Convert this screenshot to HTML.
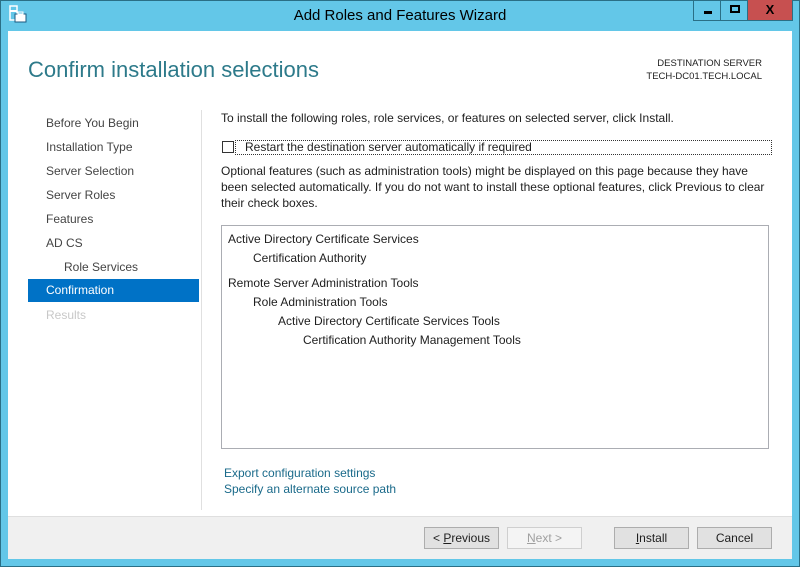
<!DOCTYPE html>
<html><head><meta charset="utf-8"><style>
*{margin:0;padding:0;box-sizing:border-box}
body{width:800px;height:567px;overflow:hidden;background:#63c7e8;font-family:"Liberation Sans",sans-serif;font-size:12px;color:#1e1e1e;position:relative}
.a{position:absolute;white-space:nowrap}
.btn{position:absolute;top:527px;width:75px;height:22px;border:1px solid #adadad;background:#e1e1e1;text-align:center;line-height:20px;font-size:12px}
</style></head><body>
<div class="a" style="left:0;top:0;width:800px;height:567px;border:1px solid #2a6f86"></div>
<svg class="a" style="left:9px;top:5px" width="18" height="18" viewBox="0 0 18 18"><rect x="1" y="1" width="7" height="14" fill="none" stroke="#fff" stroke-width="1.5"/><rect x="1" y="5" width="7" height="2" fill="#fff"/><rect x="6" y="9" width="11" height="8" fill="#fff" stroke="#1a5a80"/><rect x="9" y="7" width="5" height="2" fill="none" stroke="#fff"/></svg>
<div class="a" style="left:0;width:800px;top:7px;text-align:center;font-size:15px;color:#000">Add Roles and Features Wizard</div>
<div class="a" style="left:693px;top:0;width:28px;height:21px;border:1px solid #2a6f86;border-top:0"><div class="a" style="left:10px;top:11px;width:8px;height:3px;background:#000"></div></div>
<div class="a" style="left:720px;top:0;width:28px;height:21px;border:1px solid #2a6f86;border-top:0"><div class="a" style="left:9px;top:5px;width:10px;height:8px;border:2px solid #000"></div></div>
<div class="a" style="left:747px;top:0;width:46px;height:21px;background:#c75050;border:1px solid #2a6f86;border-top:0;text-align:center;font-weight:bold;font-size:13px;line-height:20px;color:#000">X</div>
<div class="a" style="left:8px;top:31px;width:784px;height:528px;background:#fff"></div>
<div class="a" style="left:8px;top:516px;width:784px;height:43px;background:#f0f0f0;border-top:1px solid #dfdfdf"></div>
<div class="a" style="left:28px;top:57px;font-size:22px;color:#2d7a8a">Confirm installation selections</div>
<div class="a" style="right:38px;top:57px;font-size:9.5px;text-align:right;line-height:13px">DESTINATION SERVER<br>TECH-DC01.TECH.LOCAL</div>
<div class="a" style="left:201px;top:110px;width:1px;height:400px;background:#e0e0e0"></div>
<div class="a" style="left:46px;top:111px;line-height:24px;color:#444">Before You Begin<br>Installation Type<br>Server Selection<br>Server Roles<br>Features<br>AD CS<br><span style="padding-left:18px">Role Services</span></div>
<div class="a" style="left:28px;top:279px;width:171px;height:23px;background:#0072c6;color:#fff;padding-left:18px;line-height:23px">Confirmation</div>
<div class="a" style="left:46px;top:308px;color:#c8c8c8">Results</div>
<div class="a" style="left:221px;top:111px">To install the following roles, role services, or features on selected server, click Install.</div>
<div class="a" style="left:222px;top:141px;width:12px;height:12px;border:1px solid #333"></div>
<div class="a" style="left:235px;top:140px;width:537px;height:15px;border:1px dotted #333;padding-left:9px;line-height:13px">Restart the destination server automatically if required</div>
<div class="a" style="left:221px;top:163px;line-height:16px">Optional features (such as administration tools) might be displayed on this page because they have<br>been selected automatically. If you do not want to install these optional features, click Previous to clear<br>their check boxes.</div>
<div class="a" style="left:221px;top:225px;width:548px;height:224px;border:1px solid #abadb3"></div>
<div class="a" style="left:228px;top:230px;line-height:19px">Active Directory Certificate Services<br><span style="padding-left:25px">Certification Authority</span><br><div style="height:6px"></div>Remote Server Administration Tools<br><span style="padding-left:25px">Role Administration Tools</span><br><span style="padding-left:50px">Active Directory Certificate Services Tools</span><br><span style="padding-left:75px">Certification Authority Management Tools</span></div>
<div class="a" style="left:224px;top:465px;color:#1a6a8a;line-height:16px">Export configuration settings<br>Specify an alternate source path</div>
<div class="btn" style="left:424px">&lt; <u>P</u>revious</div>
<div class="btn" style="left:507px;color:#a0a0a0;border-color:#cfcfcf;background:#f4f4f4"><u>N</u>ext &gt;</div>
<div class="btn" style="left:614px"><u>I</u>nstall</div>
<div class="btn" style="left:697px">Cancel</div>
</body></html>
